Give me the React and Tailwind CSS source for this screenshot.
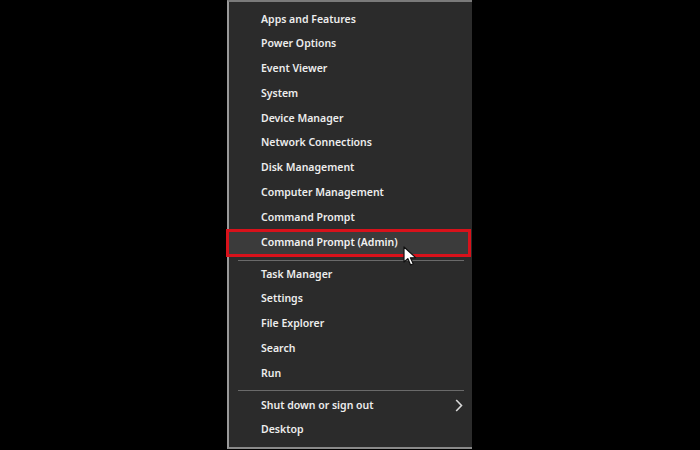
const top = [
  'Apps and Features',
  'Power Options',
  'Event Viewer',
  'System',
  'Device Manager',
  'Network Connections',
  'Disk Management',
  'Computer Management',
  'Command Prompt',
]

const middle = ['Task Manager', 'Settings', 'File Explorer', 'Search', 'Run']

function Item({ label, children }) {
  return (
    <div className="h-[24.75px] shrink-0 flex items-center pl-[32px] pr-[9px] text-[10.5px] font-semibold text-[#ededed]">
      <span className="flex-1">{label}</span>
      {children}
    </div>
  )
}

function Separator({ className }) {
  return <div className={`h-px shrink-0 ml-[9px] mr-[8px] bg-[#6a6a6a] ${className}`} />
}

function Cursor() {
  return (
    <svg className="absolute left-[403px] top-[246px]" width="16" height="21" viewBox="0 0 16 21">
      <path
        d="M1 1 L1 16 L4.8 12.6 L7.6 19 L10.2 17.8 L7.4 11.8 L12.6 11.6 Z"
        fill="#ffffff"
        stroke="#111111"
        strokeWidth="1.2"
        strokeLinejoin="round"
      />
    </svg>
  )
}

export default function App() {
  return (
    <div className="relative w-[700px] h-[450px] bg-black flex overflow-hidden font-['Noto_Sans','Open_Sans',sans-serif]">
      <div className="ml-[227px] w-[245px] h-[449px] bg-[#2b2b2b] border-l-2 border-l-[#9a9a9a] border-t-2 border-t-[#7a7a7a] border-b-2 border-b-[#8a8a8a] flex flex-col pt-[5.2px]">
        {top.map((label) => (
          <Item key={label} label={label} />
        ))}

        <div className="h-[28px] shrink-0 -mt-[1px] -ml-[3px] mr-[1px] flex items-center pl-[32px] border-[3px] border-[#d8121b] bg-[#3b3b3b] text-[10.5px] font-semibold text-[#f2f2f2]">
          Command Prompt (Admin)
        </div>

        <Separator className="mt-[3px] mb-[1.2px]" />

        {middle.map((label) => (
          <Item key={label} label={label} />
        ))}

        <Separator className="mt-[4px] mb-[2.2px]" />

        <Item label="Shut down or sign out">
          <svg width="8" height="13" viewBox="0 0 8 13">
            <path d="M1.2 1 L6.5 6.5 L1.2 12" fill="none" stroke="#d8d8d8" strokeWidth="1.6" />
          </svg>
        </Item>
        <Item label="Desktop" />
      </div>

      <Cursor />
    </div>
  )
}
